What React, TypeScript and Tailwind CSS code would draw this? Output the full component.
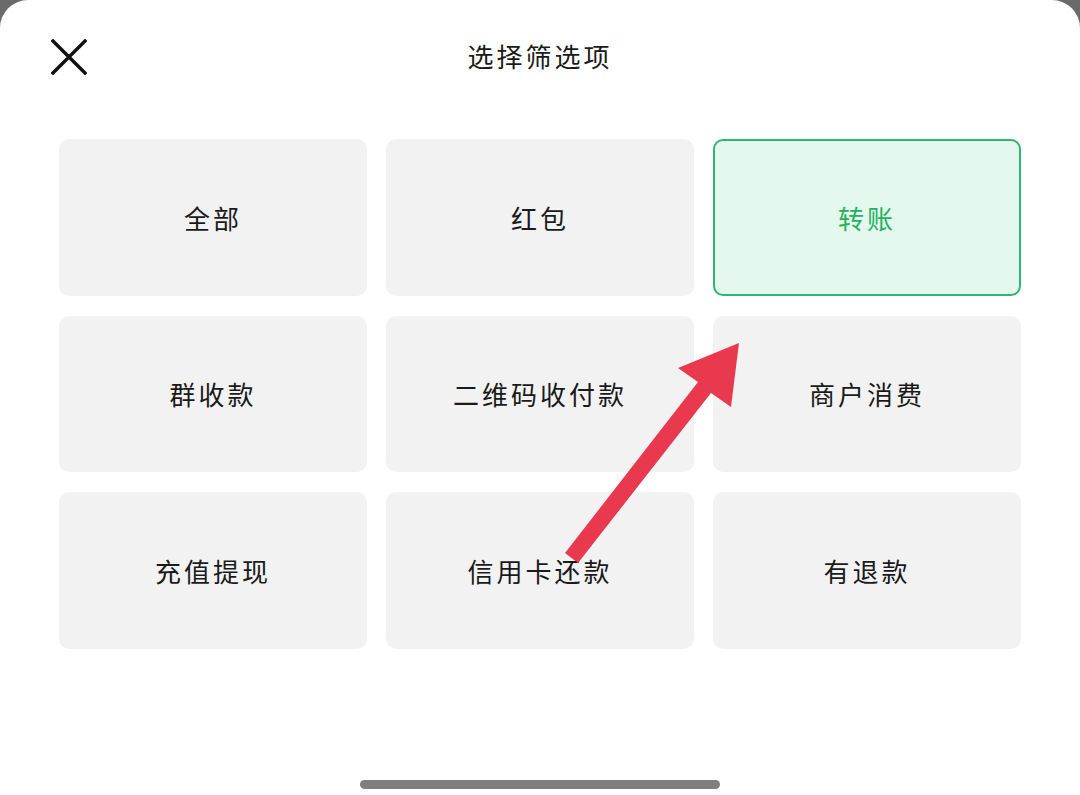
import { useState } from 'react'

const OPTIONS = ['全部', '红包', '转账', '群收款', '二维码收付款', '商户消费', '充值提现', '信用卡还款', '有退款']

export default function App() {
  const [selected, setSelected] = useState('转账')

  return (
    <div className="w-[1080px] h-[795px] bg-[#6a6a6a] overflow-hidden" style={{ fontFamily: '"Noto Sans CJK SC", sans-serif' }}>
      <div className="relative w-full h-full bg-white rounded-t-[28px] flex flex-col">
        {/* Header */}
        <div className="relative h-[110px] flex items-center justify-center">
          <button className="absolute left-[51px] top-[39px] w-[36px] h-[36px]">
            <svg width="36" height="36" viewBox="0 0 36 36">
              <path d="M2 2L34 34M34 2L2 34" stroke="#111" strokeWidth="3.4" strokeLinecap="square" />
            </svg>
          </button>
          <h1 className="text-[26px] tracking-[3px] text-[#1a1a1a] font-normal">选择筛选项</h1>
        </div>

        {/* Options */}
        <div className="grid grid-cols-3 gap-x-[19px] gap-y-[20px] px-[59px] pt-[29px]">
          {OPTIONS.map(o => {
            const active = o === selected
            return (
              <button
                key={o}
                onClick={() => setSelected(o)}
                className={
                  active
                    ? 'h-[156.5px] rounded-[10px] flex items-center justify-center bg-[#e4f8ed] border-2 border-[#30b470] text-[#23b25f] text-[26px] tracking-[3px]'
                    : 'h-[156.5px] rounded-[10px] flex items-center justify-center bg-[#f2f2f2] text-[#1a1a1a] text-[26px] tracking-[3px]'
                }
              >
                {o}
              </button>
            )
          })}
        </div>

        {/* Annotation arrow */}
        <svg className="absolute left-0 top-0 pointer-events-none" width="1080" height="795">
          <path d="M565 553 L698 382 L678 368 L739 343 L731 407 L711 393 L578 563 Z" fill="#e8394f" />
        </svg>

        {/* Home indicator */}
        <div className="mt-auto mb-[6px] mx-auto w-[360px] h-[9px] rounded-full bg-[#7f7f7f]" />
      </div>
    </div>
  )
}
